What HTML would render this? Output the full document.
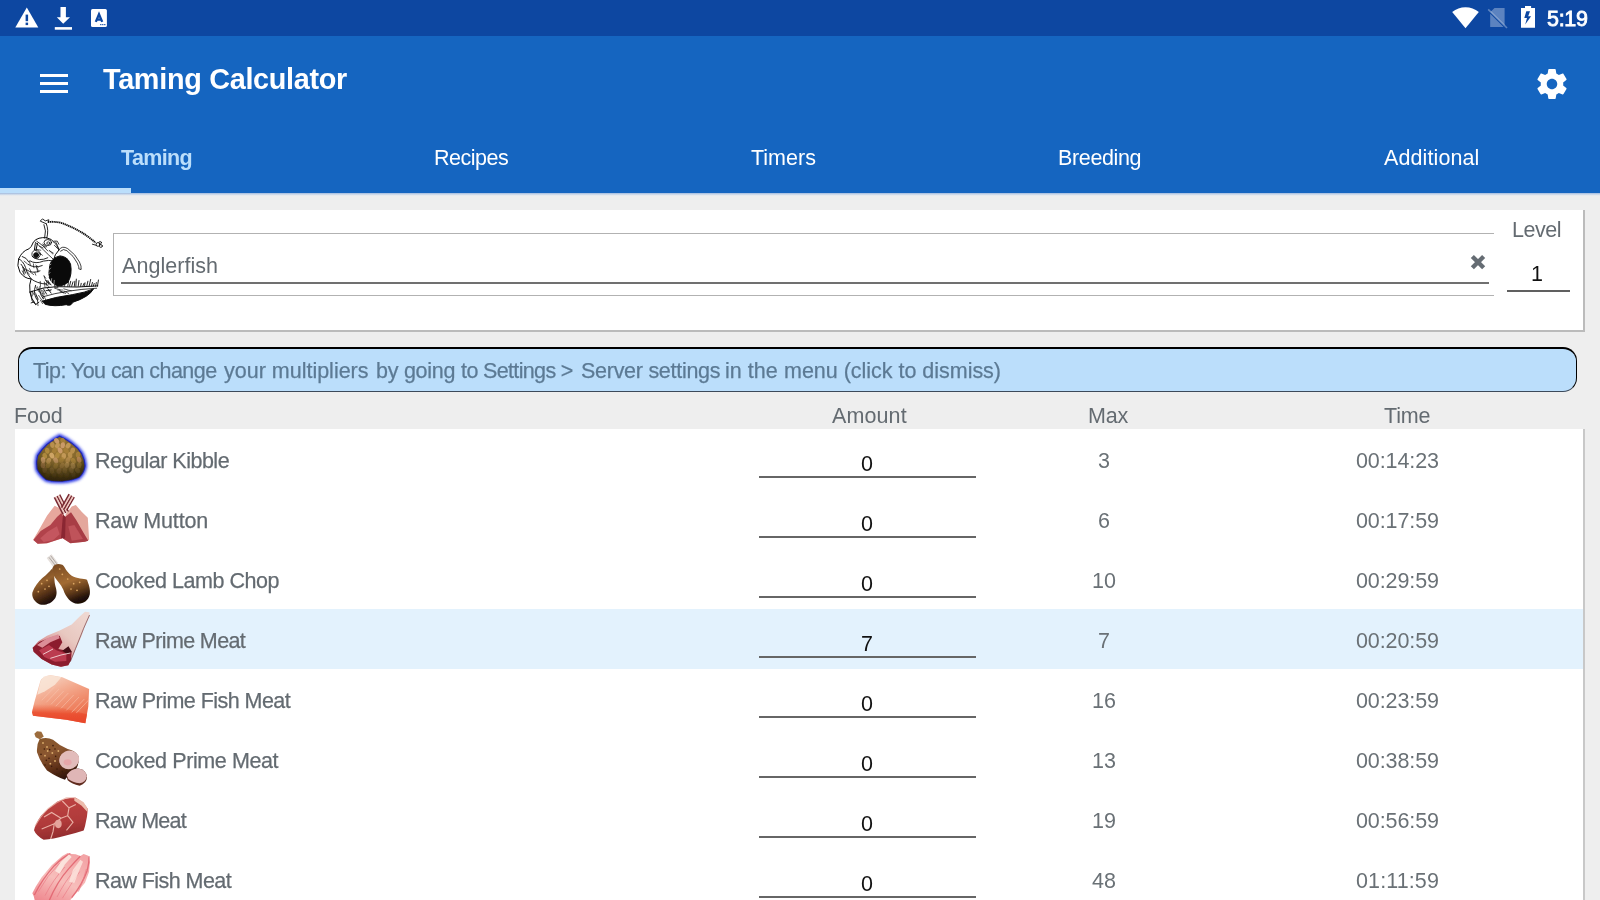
<!DOCTYPE html><html><head><meta charset="utf-8"><title>Taming Calculator</title><style>
html,body{margin:0;padding:0}
body{width:1600px;height:900px;overflow:hidden;background:#eeeeee;font-family:"Liberation Sans", sans-serif;position:relative}
.a{position:absolute}
.m{position:absolute;white-space:nowrap;line-height:30px;height:30px;will-change:transform}
#status{left:0;top:0;width:1600px;height:36px;background:#0d47a1}
#appbar{left:0;top:36px;width:1600px;height:156.6px;background:#1565c0}
#shadow{left:0;top:192.6px;width:1600px;height:3.4px;background:linear-gradient(#a9c0e0 0%,#b4c8e3 30%,#dde4ed 62%,#eeeeee 100%)}
#ind{left:0;top:187.8px;width:131px;height:5px;background:#bbdefb}
.hb{left:40px;width:28px;height:3px;background:#fff}
#card{left:15px;top:210px;width:1568px;height:120px;background:#fff;border-right:2px solid #bbb;border-bottom:2px solid #bbb}
#box{left:113px;top:233.4px;width:1380.3px;height:60.9px;border:1.2px solid #b2b2b2;border-right:none}
#uline{left:121px;top:282px;width:1368px;height:1.8px;background:#707070}
#lline{left:1507px;top:290px;width:63px;height:1.9px;background:#606060}
#tipbox{left:18px;top:346.8px;width:1557px;height:42.4px;background:#bbdefb;border:1.6px solid #000;border-top-width:2.2px;border-bottom-width:1px;border-bottom-color:#3c4a5a;border-radius:14px}
#list{left:15px;top:429px;width:1568px;height:480px;background:#fff;border-right:2px solid #c8c8c8}
#sel{left:15px;top:609px;width:1568px;height:60px;background:#e3f2fd}
.ul{left:759.4px;width:216.4px;height:1.6px;background:#666}
</style></head><body>
<div class="a" id="status"></div><div class="a" id="appbar"></div><div class="a" id="shadow"></div><div class="a" id="ind"></div>
<div class="a hb" style="top:74px"></div>
<div class="a hb" style="top:82px"></div>
<div class="a hb" style="top:90px"></div>
<svg class="a" style="left:0;top:0" width="1600" height="36" viewBox="0 0 1600 36">
<path d="M26.8 7.6 L38.3 27.5 H15.3 Z" fill="#fff"/>
<rect x="25.6" y="14.6" width="2.5" height="6.6" fill="#0d47a1"/><rect x="25.6" y="22.6" width="2.5" height="2.5" fill="#0d47a1"/>
<path d="M60.5 6.9 H65.9 V17.3 H70 L63.2 23.7 L56.8 17.3 H60.5 Z" fill="#fff"/>
<rect x="54.8" y="27.1" width="17.2" height="2.6" fill="#fff"/>
<rect x="91" y="8.9" width="15.9" height="18" rx="1.5" fill="#fff"/>
<path d="M95.8 21.9 L99 14.2 L102.2 21.9 M97 19.6 H101" stroke="#0d47a1" stroke-width="2.3" fill="none"/>
<rect x="100.2" y="24" width="1.2" height="1.2" fill="#0d47a1"/><rect x="102.2" y="24" width="1.2" height="1.2" fill="#0d47a1"/><rect x="104.2" y="24" width="1.2" height="1.2" fill="#0d47a1"/>
<path d="M1465.5 28.2 L1452.2 12 A20.9 20.9 0 0 1 1478.8 12 Z" fill="#fff"/>
<path d="M1494.5 8 H1504.6 V25.4 L1490.2 11.4 V12.3 Z" fill="#fff" fill-opacity=".33"/>
<path d="M1490.2 13.8 L1503.6 27 H1490.2 Z" fill="#fff" fill-opacity=".33"/>
<path d="M1488.2 9.4 L1507 28" stroke="#fff" stroke-opacity=".33" stroke-width="1.6"/>
<path d="M1525 5.9 H1531.1 V8 H1535 V27.8 H1521 V8 H1525 Z" fill="#fff"/>
<path d="M1526.3 11.2 H1530 L1528.2 16.3 H1531.1 L1525.2 24.4 L1527 18 H1524.3 Z" fill="#0d47a1"/>
</svg>
<svg class="a" style="left:1534px;top:66px" width="36" height="36" viewBox="0 0 24 24"><path fill="#fff" d="M19.43 12.98c.04-.32.07-.64.07-.98s-.03-.66-.07-.98l2.11-1.65c.19-.15.24-.42.12-.64l-2-3.46c-.12-.22-.39-.3-.61-.22l-2.49 1c-.52-.4-1.08-.73-1.69-.98l-.38-2.65C14.46 2.18 14.25 2 14 2h-4c-.25 0-.46.18-.49.42l-.38 2.65c-.61.25-1.17.59-1.69.98l-2.49-1c-.23-.09-.49 0-.61.22l-2 3.46c-.13.22-.07.49.12.64l2.11 1.65c-.04.32-.07.65-.07.98s.03.66.07.98l-2.11 1.65c-.19.15-.24.42-.12.64l2 3.46c.12.22.39.3.61.22l2.49-1c.52.4 1.08.73 1.69.98l.38 2.65c.03.24.24.42.49.42h4c.25 0 .46-.18.49-.42l.38-2.65c.61-.25 1.17-.59 1.69-.98l2.49 1c.23.09.49 0 .61-.22l2-3.46c.12-.22.07-.49-.12-.64l-2.11-1.65zM12 15.500c-1.93 0-3.5-1.57-3.5-3.5s1.570-3.5 3.5-3.5 3.500 1.570 3.500 3.500-1.570 3.500-3.500 3.500z"/></svg>
<div class="a" id="card"></div><div class="a" id="box"></div><div class="a" id="uline"></div><div class="a" id="lline"></div>
<svg class="a" style="left:10px;top:212px" width="100" height="100" viewBox="0 0 900 900"><g fill="none" stroke="#0c0c0c" stroke-width="9" stroke-linecap="round" stroke-linejoin="round">
<path d="M360 470 Q380 410 450 395 Q520 400 545 470 Q562 560 522 632 Q480 672 420 662 Q360 640 350 560 Z" fill="#0a0a0a"/>
<path d="M292 802 Q400 766 560 744 Q680 724 752 692 Q712 765 566 812 Q546 852 506 834 Q400 854 320 832 Z" fill="#0a0a0a"/>
<path d="M180 720 Q300 672 420 672 Q600 682 790 665"/>
<path d="M300 762 Q500 702 780 686" stroke-width="7"/>
<path d="M520 668 l7 -45 M536 668 l10 -44 M555 668 l12 -39 M579 668 l5 -45 M593 668 l4 -64 M614 668 l7 -51 M636 668 l5 -26 M655 668 l12 -26 M671 668 l4 -31 M691 668 l10 -45 M712 668 l14 -61 M733 668 l9 -34 M749 668 l9 -25 M770 668 l7 -33 M787 668 l9 -56 " stroke-width="8"/>
<path d="M400 668 L410 640 M430 668 L440 636 M460 668 L468 642 M490 668 L496 646" stroke-width="7"/>
<path d="M330 232 Q250 222 212 268 Q192 320 170 332 Q110 350 78 422 Q58 482 90 542 Q130 600 190 602 Q170 650 180 720 Q190 780 230 832"/>
<path d="M330 232 Q380 240 402 280 Q432 300 442 340 Q400 380 390 440 Q370 460 360 482"/>
<path d="M225 270 Q260 300 300 340 Q350 390 395 430 M240 262 Q300 300 340 350" stroke-width="7"/>
<circle cx="235" cy="388" r="22" fill="#111"/><circle cx="235" cy="380" r="38" stroke-width="7"/>
<path d="M247 282 L233 348 M228 285 L220 340" stroke-width="9"/>
<ellipse cx="340" cy="275" rx="34" ry="27" stroke-width="8"/><ellipse cx="345" cy="280" rx="14" ry="11" stroke-width="7"/>
<path d="M410 268 Q432 290 426 320 M400 300 L442 342 M395 262 L425 262 L440 290" stroke-width="7"/>
<path d="M332 232 Q350 160 327 106 M312 234 Q330 166 306 114" stroke-width="8"/>
<path d="M327 106 L272 82 L292 62 L318 80 L350 70 L345 92" stroke-width="8"/>
<path d="M340 90 Q410 84 470 100 Q600 150 700 220 Q740 250 770 276" stroke-width="17" stroke-dasharray="12 5" stroke-linecap="butt"/>
<circle cx="792" cy="292" r="17" stroke-width="8"/><circle cx="818" cy="306" r="13" stroke-width="7"/><circle cx="812" cy="276" r="11" stroke-width="7"/><path d="M742 290 L776 300" stroke-width="8"/>
<path d="M440 340 Q470 298 520 330 Q590 380 625 450 Q646 490 640 515 M455 352 Q480 325 512 348 Q575 395 606 460 Q622 495 622 512 M622 512 Q630 528 640 515" stroke-width="7"/>
<path d="M180 440 Q230 472 300 442 Q350 430 390 440 M200 400 Q260 452 340 412 M160 470 Q220 512 290 482 M150 520 Q200 560 270 530" stroke-width="8"/>
<path d="M190 602 Q240 642 330 650 M230 660 Q200 740 250 800 M270 670 Q260 740 300 780 M180 720 L200 800 L232 832 M215 810 L190 818 M232 832 L260 812 M300 690 L330 740 M340 690 L370 730" stroke-width="8"/>
<path d="M78 422 Q120 440 140 500 Q150 560 190 602 M100 470 Q130 500 140 550 M110 400 Q150 410 170 450" stroke-width="8"/>
<path d="M120 520 l6 37 M116 497 l27 27 M127 442 l25 21 M223 544 l9 24 M238 490 l16 38 M175 509 l12 23 M183 541 l30 22 M110 530 l20 37 M113 500 l17 27 M240 499 l10 43 M157 540 l17 20 M175 443 l8 34 M232 478 l24 17 M211 467 l4 35 M343 618 l7 35 M330 615 l2 51 M322 617 l20 20 M307 580 l15 38 M319 640 l33 34 M329 622 l23 27 M353 592 l31 45 M309 630 l6 47 M348 629 l22 27 M305 572 l17 24 M339 620 l28 36 M272 624 l2 42 M200 711 l15 32 M296 706 l14 34 M246 672 l27 57 M284 703 l8 33 M307 757 l21 50 M248 803 l4 40 M273 793 l20 32 M198 716 l3 40 M274 724 l22 33 M236 746 l19 39 M230 729 l18 59 M298 733 l0 50 M257 750 l35 51 M232 675 l29 43 M232 335 l45 9 M353 347 l37 23 M295 288 l36 25 M260 363 l32 27 M238 352 l28 22 M265 308 l33 15 M356 349 l30 30 M293 299 l30 19 M328 707 l44 -8 M521 703 l30 5 M403 687 l48 13 M430 702 l43 0 M445 708 l37 21 M324 707 l43 1 M455 712 l45 21 M484 692 l32 8 M485 711 l43 22 M402 681 l29 -1 " stroke-width="6"/>
<path d="M370 640 L375 600 M395 652 L398 615 M345 560 L360 545 M350 520 L365 505 M352 480 L368 470" stroke="#fff" stroke-width="5"/>
</g></svg>
<svg class="a" style="left:1465px;top:250px" width="26" height="26" viewBox="1465 250 26 26"><path d="M1472.35 256.55 L1483.65 267.75 M1483.65 256.55 L1472.35 267.75" stroke="#656c73" stroke-width="4.4"/></svg>
<div class="a" id="tipbox"></div>
<div class="a" id="list"></div><div class="a" id="sel"></div>
<div class="a ul" style="top:476px"></div>
<svg class="a" style="left:25px;top:429px" width="70" height="60" viewBox="0 0 1050 900"><defs><filter id="b429" x="-20%" y="-20%" width="140%" height="140%"><feGaussianBlur stdDeviation="6"/></filter><filter id="g429" x="-30%" y="-30%" width="160%" height="160%"><feGaussianBlur stdDeviation="20"/></filter><radialGradient id="kg429" cx=".52" cy=".36" r=".64"><stop offset="0" stop-color="#a07a38"/><stop offset=".6" stop-color="#7c622a"/><stop offset="1" stop-color="#41360f"/></radialGradient><linearGradient id="kd429" x1="0" y1="0" x2="0" y2="1"><stop offset=".5" stop-color="#2c2006" stop-opacity="0"/><stop offset="1" stop-color="#2c2006" stop-opacity=".8"/></linearGradient></defs><g filter="url(#b429)"><path d="M520 108 Q615 150 700 215 Q795 285 850 370 Q895 460 900 550 Q890 650 810 725 Q720 768 560 782 Q420 790 320 760 Q225 690 182 600 Q160 500 190 400 Q245 310 330 232 Q420 160 520 108Z" fill="none" stroke="#2230e6" stroke-width="62" filter="url(#g429)"/><path d="M520 108 Q615 150 700 215 Q795 285 850 370 Q895 460 900 550 Q890 650 810 725 Q720 768 560 782 Q420 790 320 760 Q225 690 182 600 Q160 500 190 400 Q245 310 330 232 Q420 160 520 108Z" fill="url(#kg429)" stroke="#2328b0" stroke-width="18"/><ellipse cx="475" cy="178" rx="34" ry="46" fill="#cc9c6c" fill-opacity="0.95" transform="rotate(-32 475 178)"/><ellipse cx="569" cy="177" rx="34" ry="46" fill="#a68038" fill-opacity="0.95" transform="rotate(-31 569 177)"/><ellipse cx="411" cy="241" rx="34" ry="46" fill="#bc9250" fill-opacity="0.95" transform="rotate(-6 411 241)"/><ellipse cx="486" cy="251" rx="34" ry="46" fill="#c49a58" fill-opacity="0.95" transform="rotate(23 486 251)"/><ellipse cx="566" cy="244" rx="34" ry="46" fill="#cc9c6c" fill-opacity="0.95" transform="rotate(6 566 244)"/><ellipse cx="646" cy="252" rx="34" ry="46" fill="#c49a58" fill-opacity="0.95" transform="rotate(33 646 252)"/><ellipse cx="334" cy="327" rx="34" ry="46" fill="#b08a3e" fill-opacity="0.95" transform="rotate(-6 334 327)"/><ellipse cx="442" cy="321" rx="34" ry="46" fill="#a68038" fill-opacity="0.95" transform="rotate(22 442 321)"/><ellipse cx="526" cy="322" rx="34" ry="46" fill="#cc9c6c" fill-opacity="0.95" transform="rotate(-22 526 322)"/><ellipse cx="618" cy="324" rx="34" ry="46" fill="#a68038" fill-opacity="0.95" transform="rotate(-31 618 324)"/><ellipse cx="715" cy="324" rx="34" ry="46" fill="#bc9250" fill-opacity="0.95" transform="rotate(19 715 324)"/><ellipse cx="297" cy="403" rx="34" ry="46" fill="#b08a3e" fill-opacity="0.95" transform="rotate(-14 297 403)"/><ellipse cx="403" cy="399" rx="34" ry="46" fill="#d2a868" fill-opacity="0.95" transform="rotate(-29 403 399)"/><ellipse cx="486" cy="395" rx="34" ry="46" fill="#b08a3e" fill-opacity="0.95" transform="rotate(16 486 395)"/><ellipse cx="582" cy="405" rx="34" ry="46" fill="#c49a58" fill-opacity="0.95" transform="rotate(1 582 405)"/><ellipse cx="676" cy="392" rx="34" ry="46" fill="#bc9250" fill-opacity="0.95" transform="rotate(-5 676 392)"/><ellipse cx="795" cy="387" rx="34" ry="46" fill="#a68038" fill-opacity="0.95" transform="rotate(5 795 387)"/><ellipse cx="272" cy="466" rx="34" ry="46" fill="#cc9c6c" fill-opacity="0.75" transform="rotate(-10 272 466)"/><ellipse cx="355" cy="476" rx="34" ry="46" fill="#c49a58" fill-opacity="0.75" transform="rotate(24 355 476)"/><ellipse cx="461" cy="469" rx="34" ry="46" fill="#cc9c6c" fill-opacity="0.75" transform="rotate(-30 461 469)"/><ellipse cx="549" cy="466" rx="34" ry="46" fill="#a68038" fill-opacity="0.75" transform="rotate(35 549 466)"/><ellipse cx="645" cy="466" rx="34" ry="46" fill="#bc9250" fill-opacity="0.75" transform="rotate(27 645 466)"/><ellipse cx="725" cy="479" rx="34" ry="46" fill="#b08a3e" fill-opacity="0.75" transform="rotate(-23 725 479)"/><ellipse cx="812" cy="461" rx="34" ry="46" fill="#c08a5a" fill-opacity="0.75" transform="rotate(-15 812 461)"/><ellipse cx="269" cy="543" rx="34" ry="46" fill="#c08a5a" fill-opacity="0.54" transform="rotate(-0 269 543)"/><ellipse cx="347" cy="543" rx="34" ry="46" fill="#b08a3e" fill-opacity="0.54" transform="rotate(27 347 543)"/><ellipse cx="460" cy="552" rx="34" ry="46" fill="#b08a3e" fill-opacity="0.54" transform="rotate(14 460 552)"/><ellipse cx="559" cy="549" rx="34" ry="46" fill="#bc9250" fill-opacity="0.54" transform="rotate(32 559 549)"/><ellipse cx="630" cy="539" rx="34" ry="46" fill="#d2a868" fill-opacity="0.54" transform="rotate(11 630 539)"/><ellipse cx="720" cy="552" rx="34" ry="46" fill="#d2a868" fill-opacity="0.54" transform="rotate(-17 720 552)"/><ellipse cx="814" cy="543" rx="34" ry="46" fill="#b08a3e" fill-opacity="0.54" transform="rotate(8 814 543)"/><ellipse cx="295" cy="613" rx="34" ry="46" fill="#c08a5a" fill-opacity="0.33" transform="rotate(1 295 613)"/><ellipse cx="403" cy="624" rx="34" ry="46" fill="#c49a58" fill-opacity="0.33" transform="rotate(-3 403 624)"/><ellipse cx="510" cy="629" rx="34" ry="46" fill="#cc9c6c" fill-opacity="0.33" transform="rotate(21 510 629)"/><ellipse cx="597" cy="618" rx="34" ry="46" fill="#c49a58" fill-opacity="0.33" transform="rotate(-1 597 618)"/><ellipse cx="697" cy="614" rx="34" ry="46" fill="#d2a868" fill-opacity="0.33" transform="rotate(-4 697 614)"/><ellipse cx="789" cy="622" rx="34" ry="46" fill="#c49a58" fill-opacity="0.33" transform="rotate(-35 789 622)"/><ellipse cx="338" cy="682" rx="34" ry="46" fill="#b08a3e" fill-opacity="0.18" transform="rotate(8 338 682)"/><ellipse cx="432" cy="684" rx="34" ry="46" fill="#bc9250" fill-opacity="0.18" transform="rotate(-25 432 684)"/><ellipse cx="533" cy="687" rx="34" ry="46" fill="#b08a3e" fill-opacity="0.18" transform="rotate(-2 533 687)"/><ellipse cx="625" cy="690" rx="34" ry="46" fill="#bc9250" fill-opacity="0.18" transform="rotate(-1 625 690)"/><ellipse cx="727" cy="683" rx="34" ry="46" fill="#cc9c6c" fill-opacity="0.18" transform="rotate(-11 727 683)"/><path d="M520 108 Q615 150 700 215 Q795 285 850 370 Q895 460 900 550 Q890 650 810 725 Q720 768 560 782 Q420 790 320 760 Q225 690 182 600 Q160 500 190 400 Q245 310 330 232 Q420 160 520 108Z" fill="url(#kd429)"/></g></svg>
<div class="a ul" style="top:536px"></div>
<svg class="a" style="left:25px;top:489px" width="70" height="60" viewBox="0 0 1050 900"><defs><filter id="b489" x="-20%" y="-20%" width="140%" height="140%"><feGaussianBlur stdDeviation="6"/></filter><filter id="g489" x="-30%" y="-30%" width="160%" height="160%"><feGaussianBlur stdDeviation="20"/></filter></defs><g filter="url(#b489)"><path d="M122 762 L200 630 L330 400 L445 250 L520 290 L580 380 L590 430 L560 740 L330 812 L190 822Z" fill="#e7a79d"/><path d="M125 765 L235 630 L380 540 L480 420 L545 360 L585 440 L560 740 L330 812 L190 822Z" fill="#b1434b"/><path d="M230 740 L340 640 L480 560 L520 680 L420 770 L280 795Z" fill="#c4575f"/><path d="M610 380 L700 262 L762 240 L850 340 L942 432 L962 762 L900 792 L680 812 L570 742Z" fill="#e4a79c"/><path d="M600 420 L690 350 L770 470 L880 660 L950 775 L900 792 L680 812 L570 742Z" fill="#a83c45"/><path d="M650 560 L740 540 L870 750 L700 775Z" fill="#bf525a"/><path d="M570 380 L610 420 L600 740 L540 740Z" fill="#8a2630"/><path d="M519 85 L649 340" stroke="#7a2a32" stroke-width="23" fill="none"/><path d="M500 95 L630 350" stroke="#f0c8c0" stroke-width="23" fill="none"/><path d="M480 105 L610 360" stroke="#7a2a32" stroke-width="23" fill="none"/><path d="M460 115 L590 370" stroke="#f0c8c0" stroke-width="23" fill="none"/><path d="M441 125 L571 380" stroke="#7a2a32" stroke-width="23" fill="none"/><path d="M738 122 L623 322" stroke="#7a2a32" stroke-width="23" fill="none"/><path d="M719 111 L604 311" stroke="#f0c8c0" stroke-width="23" fill="none"/><path d="M700 100 L585 300" stroke="#7a2a32" stroke-width="23" fill="none"/><path d="M681 89 L566 289" stroke="#f0c8c0" stroke-width="23" fill="none"/><path d="M662 78 L547 278" stroke="#7a2a32" stroke-width="23" fill="none"/></g></svg>
<div class="a ul" style="top:596px"></div>
<svg class="a" style="left:25px;top:549px" width="70" height="60" viewBox="0 0 1050 900"><defs><filter id="b549" x="-20%" y="-20%" width="140%" height="140%"><feGaussianBlur stdDeviation="6"/></filter><filter id="g549" x="-30%" y="-30%" width="160%" height="160%"><feGaussianBlur stdDeviation="20"/></filter><linearGradient id="l1549" x1=".3" y1="0" x2=".65" y2="1"><stop offset="0" stop-color="#6e4420"/><stop offset=".35" stop-color="#94602e"/><stop offset=".65" stop-color="#5c3618"/><stop offset=".9" stop-color="#25130a"/><stop offset="1" stop-color="#1a0d06"/></linearGradient><linearGradient id="l2549" x1=".25" y1="0" x2=".6" y2="1"><stop offset="0" stop-color="#7e4e24"/><stop offset=".45" stop-color="#a26b33"/><stop offset=".7" stop-color="#68401c"/><stop offset=".92" stop-color="#25130a"/><stop offset="1" stop-color="#1a0d06"/></linearGradient></defs><g filter="url(#b549)"><path d="M325 135 L398 78 L500 215 L425 275Z" fill="#e6e0dc"/><path d="M360 125 L450 240 M385 100 L475 220" stroke="#a09894" stroke-width="12" fill="none"/><path d="M420 270 C440 220 500 215 560 235 C600 260 610 330 700 400 C780 445 880 440 930 460 C950 520 985 590 972 680 C955 770 880 825 790 822 C690 815 610 720 575 610 C540 530 470 470 425 390 C400 340 400 300 420 270Z" fill="url(#l2549)"/><path d="M400 300 C440 340 440 420 445 500 C455 580 500 650 455 735 C400 820 300 850 225 832 C140 800 95 720 112 650 C140 570 200 490 260 435 C330 380 370 340 400 300Z" fill="url(#l1549)"/><circle cx="250" cy="520" r="13" fill="#dba663"/><circle cx="330" cy="470" r="13" fill="#dba663"/><circle cx="200" cy="640" r="13" fill="#dba663"/><circle cx="300" cy="600" r="13" fill="#dba663"/><circle cx="360" cy="560" r="13" fill="#dba663"/><circle cx="560" cy="380" r="13" fill="#dba663"/><circle cx="640" cy="450" r="13" fill="#dba663"/><circle cx="730" cy="520" r="13" fill="#dba663"/><circle cx="820" cy="500" r="13" fill="#dba663"/><circle cx="690" cy="600" r="13" fill="#dba663"/><circle cx="780" cy="620" r="13" fill="#dba663"/><circle cx="520" cy="300" r="13" fill="#dba663"/></g></svg>
<div class="a ul" style="top:656px"></div>
<svg class="a" style="left:25px;top:609px" width="70" height="60" viewBox="0 0 1050 900"><defs><filter id="b609" x="-20%" y="-20%" width="140%" height="140%"><feGaussianBlur stdDeviation="6"/></filter><filter id="g609" x="-30%" y="-30%" width="160%" height="160%"><feGaussianBlur stdDeviation="20"/></filter><linearGradient id="p1609" x1="1" y1="0" x2=".2" y2=".9"><stop offset="0" stop-color="#f0dad4"/><stop offset=".5" stop-color="#e8c8c0"/><stop offset=".75" stop-color="#dda0a0"/><stop offset="1" stop-color="#b84858"/></linearGradient></defs><g filter="url(#b609)"><path d="M820 112 L900 40 L965 50 L972 110 L900 260 L850 400 L780 560 L700 740 L650 842 L540 866 L400 832 L250 750 L130 640 L115 580 L200 482 L330 402 L520 322 L700 232Z" fill="url(#p1609)"/><path d="M115 580 L220 490 L400 420 L520 400 L560 500 L500 600 L700 640 L690 770 L650 842 L540 866 L400 832 L250 750 L130 640Z" fill="#8c1e2d"/><path d="M210 620 L360 540 L470 620 L620 670 L620 780 L450 790 L290 720Z" fill="#bb3a50"/><path d="M180 540 L330 440 L500 380 L520 440 L380 500 L260 580Z" fill="#dc8e98"/><path d="M560 625 L652 558 L702 640 L640 682Z" fill="#450b13"/><path d="M270 680 L420 600 M380 740 L540 690 L680 660" stroke="#f2d4d4" stroke-width="14" fill="none"/><path d="M968 90 L880 290 L760 590 L680 790" stroke="#5a1a22" stroke-width="14" fill="none" stroke-opacity=".6"/></g></svg>
<div class="a ul" style="top:716px"></div>
<svg class="a" style="left:25px;top:669px" width="70" height="60" viewBox="0 0 1050 900"><defs><filter id="b669" x="-20%" y="-20%" width="140%" height="140%"><feGaussianBlur stdDeviation="6"/></filter><filter id="g669" x="-30%" y="-30%" width="160%" height="160%"><feGaussianBlur stdDeviation="20"/></filter><linearGradient id="f2669" x1="0" y1="0" x2="-.12" y2="1"><stop offset="0" stop-color="#ee6a48" stop-opacity="0"/><stop offset=".45" stop-color="#ea4e2e" stop-opacity=".9"/><stop offset="1" stop-color="#e8442a"/></linearGradient><linearGradient id="f1669" x1=".2" y1="0" x2=".7" y2="1"><stop offset="0" stop-color="#f7d8c8"/><stop offset=".4" stop-color="#f3a88c"/><stop offset=".8" stop-color="#ee7c5a"/><stop offset="1" stop-color="#ea5c3c"/></linearGradient></defs><g filter="url(#b669)"><path d="M105 650 L140 500 L230 180 Q250 118 380 90 L560 122 L962 300 L950 560 L905 812 L620 762 L120 702 Z" fill="url(#f1669)"/><path d="M105 650 L135 520 L340 520 L620 600 L930 680 L905 812 L620 762 L120 702Z" fill="url(#f2669)"/><path d="M235 180 L282 112 L380 92 L545 125 L450 235 L300 335 L185 385Z" fill="#f9e6d8" fill-opacity=".85"/><path d="M250 470 L440 270" stroke="#f8c4ae" stroke-width="13" stroke-opacity=".65" fill="none"/><path d="M320 500 L510 300" stroke="#f8c4ae" stroke-width="13" stroke-opacity=".65" fill="none"/><path d="M390 530 L580 330" stroke="#f8c4ae" stroke-width="13" stroke-opacity=".65" fill="none"/><path d="M460 560 L650 360" stroke="#f8c4ae" stroke-width="13" stroke-opacity=".65" fill="none"/><path d="M540 590 L730 390" stroke="#f8c4ae" stroke-width="13" stroke-opacity=".65" fill="none"/><path d="M620 620 L810 420" stroke="#f8c4ae" stroke-width="13" stroke-opacity=".65" fill="none"/><path d="M700 650 L890 450" stroke="#f8c4ae" stroke-width="13" stroke-opacity=".65" fill="none"/><path d="M770 660 L960 460" stroke="#f8c4ae" stroke-width="13" stroke-opacity=".65" fill="none"/></g></svg>
<div class="a ul" style="top:776px"></div>
<svg class="a" style="left:25px;top:729px" width="70" height="60" viewBox="0 0 1050 900"><defs><filter id="b729" x="-20%" y="-20%" width="140%" height="140%"><feGaussianBlur stdDeviation="6"/></filter><filter id="g729" x="-30%" y="-30%" width="160%" height="160%"><feGaussianBlur stdDeviation="20"/></filter><linearGradient id="c1729" x1=".2" y1="0" x2=".6" y2="1"><stop offset="0" stop-color="#86562c"/><stop offset=".35" stop-color="#8a5630"/><stop offset=".7" stop-color="#5e3018"/><stop offset="1" stop-color="#2e1408"/></linearGradient></defs><g filter="url(#b729)"><path d="M140 70 L180 35 L245 40 L282 112 L222 152 L160 122Z" fill="#9c6c3c"/><path d="M220 150 Q330 118 420 160 Q520 250 640 300 Q745 320 800 400 Q822 520 760 620 Q640 700 600 762 Q480 722 330 622 Q220 482 180 350 Q172 230 220 150Z" fill="url(#c1729)"/><circle cx="330" cy="270" r="14" fill="#d9aa6a"/><circle cx="410" cy="360" r="14" fill="#d9aa6a"/><circle cx="300" cy="400" r="14" fill="#d9aa6a"/><circle cx="450" cy="480" r="14" fill="#d9aa6a"/><circle cx="380" cy="520" r="14" fill="#d9aa6a"/><circle cx="500" cy="330" r="14" fill="#d9aa6a"/><circle cx="270" cy="210" r="14" fill="#d9aa6a"/><circle cx="540" cy="420" r="14" fill="#d9aa6a"/><circle cx="340" cy="330" r="14" fill="#d9aa6a"/><circle cx="370" cy="310" r="12" fill="#3c1c0c"/><circle cx="460" cy="410" r="12" fill="#3c1c0c"/><circle cx="320" cy="470" r="12" fill="#3c1c0c"/><circle cx="420" cy="250" r="12" fill="#3c1c0c"/><circle cx="520" cy="520" r="12" fill="#3c1c0c"/><circle cx="290" cy="300" r="12" fill="#3c1c0c"/><circle cx="240" cy="380" r="12" fill="#3c1c0c"/><circle cx="400" cy="560" r="12" fill="#3c1c0c"/><circle cx="480" cy="600" r="12" fill="#3c1c0c"/><circle cx="560" cy="640" r="12" fill="#3c1c0c"/><circle cx="300" cy="540" r="12" fill="#3c1c0c"/><circle cx="360" cy="440" r="12" fill="#3c1c0c"/><circle cx="450" cy="300" r="12" fill="#3c1c0c"/><ellipse cx="662" cy="462" rx="152" ry="138" fill="#e2bcba" transform="rotate(-25 662 462)"/><ellipse cx="640" cy="500" rx="60" ry="46" fill="#ea9aa0" fill-opacity=".6"/><path d="M622 700 Q690 590 800 592 Q918 612 930 720 Q925 820 820 850 Q700 830 640 770 Z" fill="#5e2a1e"/><path d="M626 690 Q690 590 800 592 Q918 612 928 710 Q915 800 820 815 Q710 800 650 750 Z" fill="#dfb6b6"/></g></svg>
<div class="a ul" style="top:836px"></div>
<svg class="a" style="left:25px;top:789px" width="70" height="60" viewBox="0 0 1050 900"><defs><filter id="b789" x="-20%" y="-20%" width="140%" height="140%"><feGaussianBlur stdDeviation="6"/></filter><filter id="g789" x="-30%" y="-30%" width="160%" height="160%"><feGaussianBlur stdDeviation="20"/></filter><linearGradient id="r1789" x1=".3" y1="0" x2=".5" y2="1"><stop offset="0" stop-color="#bf4542"/><stop offset=".6" stop-color="#b03a3a"/><stop offset="1" stop-color="#8e2a2c"/></linearGradient></defs><g filter="url(#b789)"><path d="M135 620 Q150 530 240 400 Q345 290 480 190 Q620 125 760 130 Q880 195 942 300 Q935 420 900 560 L880 622 Q760 662 600 702 Q420 752 280 762 Q170 705 135 620Z" fill="url(#r1789)"/><path d="M740 132 L800 150 L880 200 L942 300 L936 345 L850 252 L740 175Z" fill="#ecbcac"/><path d="M560 180 L660 282 L762 232 M660 282 L640 400 L540 440 L440 520 L420 640 L385 750 M540 440 L400 352 L285 420 M640 400 L720 500 L622 620 M440 520 L250 600" stroke="#efbcb0" stroke-width="17" fill="none" stroke-opacity=".9"/><path d="M150 560 Q240 400 350 292 Q480 190 620 130 L760 130" stroke="#e9b4a8" stroke-width="16" fill="none" stroke-opacity=".8"/><ellipse cx="500" cy="525" rx="50" ry="62" fill="#e4a49c"/></g></svg>
<div class="a ul" style="top:896px"></div>
<svg class="a" style="left:25px;top:849px" width="70" height="60" viewBox="0 0 1050 900"><defs><filter id="b849" x="-20%" y="-20%" width="140%" height="140%"><feGaussianBlur stdDeviation="6"/></filter><filter id="g849" x="-30%" y="-30%" width="160%" height="160%"><feGaussianBlur stdDeviation="20"/></filter><linearGradient id="s1849" x1=".7" y1="0" x2=".2" y2="1"><stop offset="0" stop-color="#f3a4a6"/><stop offset=".5" stop-color="#f7bebb"/><stop offset="1" stop-color="#ee828a"/></linearGradient></defs><g filter="url(#b849)"><path d="M110 665 L160 565 L250 425 L400 245 L560 105 L640 60 L700 75 L760 80 L830 105 L880 75 L950 100 L975 195 L960 345 L900 505 L800 625 L680 765 L640 865 L170 865 L130 705Z" fill="url(#s1849)"/><path d="M140 690 Q260 450 440 250 Q560 130 680 70 M360 780 Q480 490 660 290 Q760 180 830 110 M700 730 Q860 530 930 330 Q965 200 960 110" stroke="#e0606c" stroke-width="20" fill="none" stroke-opacity=".85"/><path d="M200 640 Q330 400 520 210 M300 700 Q420 460 600 270 M480 720 Q600 480 760 300 M560 740 Q690 520 820 340 M800 640 Q880 480 920 300" stroke="#ea7a84" stroke-width="14" fill="none" stroke-opacity=".7"/><path d="M450 330 L540 190 L660 80 L700 120 L600 230 L520 370Z" fill="#fcebe4" fill-opacity=".85"/><path d="M660 490 L720 310 L830 160 L870 190 L810 330 L740 510Z" fill="#fce6de" fill-opacity=".8"/></g></svg>
<div class="m" id="title" style="left:102.60px;top:63.82px;font-size:28.8px;color:#fff;font-weight:bold;letter-spacing:-0.298px;">Taming Calculator</div>
<div class="m" id="tab0" style="left:121.40px;top:142.75px;font-size:21.5px;color:#bbdefb;font-weight:bold;letter-spacing:-0.627px;">Taming</div>
<div class="m" id="tab1" style="left:434.40px;top:142.65px;font-size:21.5px;color:#fff;letter-spacing:-0.485px;">Recipes</div>
<div class="m" id="tab2" style="left:751.00px;top:142.65px;font-size:21.5px;color:#fff;letter-spacing:0.003px;">Timers</div>
<div class="m" id="tab3" style="left:1057.60px;top:142.65px;font-size:21.5px;color:#fff;letter-spacing:-0.355px;">Breeding</div>
<div class="m" id="tab4" style="left:1384.00px;top:142.65px;font-size:21.5px;color:#fff;letter-spacing:0.104px;">Additional</div>
<div class="m" id="clock" style="left:1547.20px;top:3.75px;font-size:21.5px;color:#fff;-webkit-text-stroke:0.8px #fff;letter-spacing:-0.320px;">5:19</div>
<div class="m" id="name" style="left:122.00px;top:251.05px;font-size:21.5px;color:#646b71;letter-spacing:0.049px;">Anglerfish</div>
<div class="m" id="level" style="left:1512.00px;top:215.05px;font-size:21.5px;color:#646b71;letter-spacing:-0.491px;">Level</div>
<div class="m" id="lvl1" style="left:1531.00px;top:259.25px;font-size:21.5px;color:#111;">1</div>
<div class="m" id="tip0" style="left:33.20px;top:355.95px;font-size:21.5px;color:#5c7a94;-webkit-text-stroke:0.25px #5c7a94;letter-spacing:-0.552px;">Tip: You can change</div>
<div class="m" id="tip1" style="left:224.40px;top:355.95px;font-size:21.5px;color:#5c7a94;-webkit-text-stroke:0.25px #5c7a94;letter-spacing:-0.003px;">your multipliers</div>
<div class="m" id="tip2" style="left:375.50px;top:355.95px;font-size:21.5px;color:#5c7a94;-webkit-text-stroke:0.25px #5c7a94;letter-spacing:-0.261px;">by going to</div>
<div class="m" id="tip3" style="left:483.20px;top:355.95px;font-size:21.5px;color:#5c7a94;-webkit-text-stroke:0.25px #5c7a94;letter-spacing:-0.650px;">Settings &gt;</div>
<div class="m" id="tip4" style="left:581.40px;top:355.95px;font-size:21.5px;color:#5c7a94;-webkit-text-stroke:0.25px #5c7a94;letter-spacing:-0.274px;">Server settings</div>
<div class="m" id="tip5" style="left:725.20px;top:355.95px;font-size:21.5px;color:#5c7a94;-webkit-text-stroke:0.25px #5c7a94;letter-spacing:0.033px;">in the</div>
<div class="m" id="tip6" style="left:784.00px;top:355.95px;font-size:21.5px;color:#5c7a94;-webkit-text-stroke:0.25px #5c7a94;letter-spacing:-0.019px;">menu (click to dismiss)</div>
<div class="m" id="hfood" style="left:14.20px;top:400.85px;font-size:21.5px;color:#646b71;letter-spacing:-0.076px;">Food</div>
<div class="m" id="hamount" style="left:832.00px;top:400.85px;font-size:21.5px;color:#646b71;letter-spacing:0.102px;">Amount</div>
<div class="m" id="hmax" style="left:1087.80px;top:400.85px;font-size:21.5px;color:#646b71;letter-spacing:-0.208px;">Max</div>
<div class="m" id="htime" style="left:1383.80px;top:400.85px;font-size:21.5px;color:#646b71;letter-spacing:-0.161px;">Time</div>
<div class="m" id="n0" style="left:95.00px;top:445.95px;font-size:21.5px;color:#646b71;-webkit-text-stroke:0.25px #646b71;letter-spacing:-0.495px;">Regular Kibble</div>
<div class="m" id="a0" style="left:860.60px;top:448.95px;font-size:21.5px;color:#111;">0</div>
<div class="m" id="m0" style="left:1003.5999999999999px;width:200px;text-align:center;top:446.05px;font-size:21.5px;color:#6a7176;">3</div>
<div class="m" id="tm0" style="left:1355.90px;top:446.05px;font-size:21.5px;color:#6a7176;letter-spacing:-0.088px;">00:14:23</div>
<div class="m" id="n1" style="left:95.00px;top:505.95px;font-size:21.5px;color:#646b71;-webkit-text-stroke:0.25px #646b71;letter-spacing:-0.167px;">Raw Mutton</div>
<div class="m" id="a1" style="left:860.60px;top:508.95px;font-size:21.5px;color:#111;">0</div>
<div class="m" id="m1" style="left:1003.5999999999999px;width:200px;text-align:center;top:506.05px;font-size:21.5px;color:#6a7176;">6</div>
<div class="m" id="tm1" style="left:1355.90px;top:506.05px;font-size:21.5px;color:#6a7176;letter-spacing:-0.088px;">00:17:59</div>
<div class="m" id="n2" style="left:95.00px;top:565.95px;font-size:21.5px;color:#646b71;-webkit-text-stroke:0.25px #646b71;letter-spacing:-0.449px;">Cooked Lamb Chop</div>
<div class="m" id="a2" style="left:860.60px;top:568.95px;font-size:21.5px;color:#111;">0</div>
<div class="m" id="m2" style="left:1003.5999999999999px;width:200px;text-align:center;top:566.05px;font-size:21.5px;color:#6a7176;">10</div>
<div class="m" id="tm2" style="left:1355.90px;top:566.05px;font-size:21.5px;color:#6a7176;letter-spacing:-0.088px;">00:29:59</div>
<div class="m" id="n3" style="left:95.00px;top:625.95px;font-size:21.5px;color:#646b71;-webkit-text-stroke:0.25px #646b71;letter-spacing:-0.625px;">Raw Prime Meat</div>
<div class="m" id="a3" style="left:860.60px;top:628.95px;font-size:21.5px;color:#111;">7</div>
<div class="m" id="m3" style="left:1003.5999999999999px;width:200px;text-align:center;top:626.05px;font-size:21.5px;color:#6a7176;">7</div>
<div class="m" id="tm3" style="left:1355.90px;top:626.05px;font-size:21.5px;color:#6a7176;letter-spacing:-0.088px;">00:20:59</div>
<div class="m" id="n4" style="left:95.00px;top:685.95px;font-size:21.5px;color:#646b71;-webkit-text-stroke:0.25px #646b71;letter-spacing:-0.542px;">Raw Prime Fish Meat</div>
<div class="m" id="a4" style="left:860.60px;top:688.95px;font-size:21.5px;color:#111;">0</div>
<div class="m" id="m4" style="left:1003.5999999999999px;width:200px;text-align:center;top:686.05px;font-size:21.5px;color:#6a7176;">16</div>
<div class="m" id="tm4" style="left:1355.90px;top:686.05px;font-size:21.5px;color:#6a7176;letter-spacing:-0.088px;">00:23:59</div>
<div class="m" id="n5" style="left:95.00px;top:745.95px;font-size:21.5px;color:#646b71;-webkit-text-stroke:0.25px #646b71;letter-spacing:-0.406px;">Cooked Prime Meat</div>
<div class="m" id="a5" style="left:860.60px;top:748.95px;font-size:21.5px;color:#111;">0</div>
<div class="m" id="m5" style="left:1003.5999999999999px;width:200px;text-align:center;top:746.05px;font-size:21.5px;color:#6a7176;">13</div>
<div class="m" id="tm5" style="left:1355.90px;top:746.05px;font-size:21.5px;color:#6a7176;letter-spacing:-0.088px;">00:38:59</div>
<div class="m" id="n6" style="left:95.00px;top:805.95px;font-size:21.5px;color:#646b71;-webkit-text-stroke:0.25px #646b71;letter-spacing:-0.706px;">Raw Meat</div>
<div class="m" id="a6" style="left:860.60px;top:808.95px;font-size:21.5px;color:#111;">0</div>
<div class="m" id="m6" style="left:1003.5999999999999px;width:200px;text-align:center;top:806.05px;font-size:21.5px;color:#6a7176;">19</div>
<div class="m" id="tm6" style="left:1355.90px;top:806.05px;font-size:21.5px;color:#6a7176;letter-spacing:-0.088px;">00:56:59</div>
<div class="m" id="n7" style="left:95.00px;top:865.95px;font-size:21.5px;color:#646b71;-webkit-text-stroke:0.25px #646b71;letter-spacing:-0.552px;">Raw Fish Meat</div>
<div class="m" id="a7" style="left:860.60px;top:868.95px;font-size:21.5px;color:#111;">0</div>
<div class="m" id="m7" style="left:1003.5999999999999px;width:200px;text-align:center;top:866.05px;font-size:21.5px;color:#6a7176;">48</div>
<div class="m" id="tm7" style="left:1355.90px;top:866.05px;font-size:21.5px;color:#6a7176;letter-spacing:0.111px;">01:11:59</div>
</body></html>
